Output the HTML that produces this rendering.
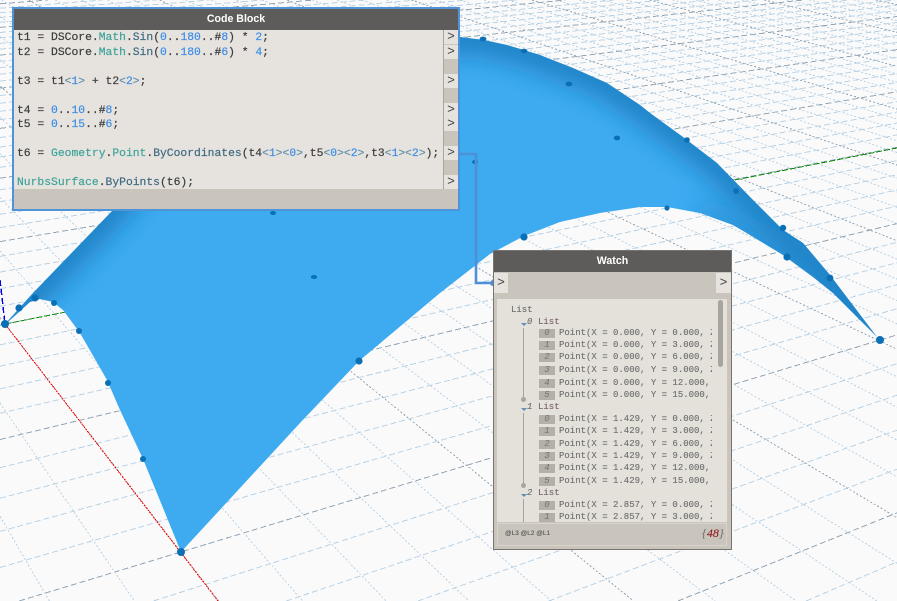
<!DOCTYPE html>
<html><head><meta charset="utf-8">
<style>
html,body{margin:0;padding:0;background:#fafafa;width:897px;height:601px;overflow:hidden}
#page{position:relative;width:897px;height:601px;overflow:hidden;background:#fafafa;font-family:"Liberation Sans",sans-serif}
svg.bg{position:absolute;left:0;top:0;display:block}
.box{position:absolute;box-sizing:border-box}
.title{position:absolute;background:#5e5c5a;color:#fff;font-weight:bold;font-size:10.6px;text-align:center}
.code{position:absolute;left:3px;font:11.35px/14px "Liberation Mono",monospace;color:#3c3c3c;white-space:pre;-webkit-text-stroke:0.2px}
.c{color:#3fa398}.n{color:#3c8ce6}.m{color:#3f6a80}.a{color:#5f8fa8}
.port{position:absolute;background:#e6e3df;font:13px/14px "Liberation Mono",monospace;color:#444;text-align:center}
.row{position:absolute;font:9px/11px "Liberation Mono",monospace;color:#6e6e6e;white-space:pre;overflow:hidden;-webkit-text-stroke:0.12px}
.idx{position:absolute;left:539px;width:16px;height:9px;background:#b4b0a8;font:italic 9px/9px "Liberation Mono",monospace;color:#77736c;text-align:center}
.tri{position:absolute;width:0;height:0;border-left:3px solid transparent;border-right:3px solid transparent;border-top:3px solid #5f8fb8}
.vl{position:absolute;width:1px;left:523px;background:#a8a59e}
.dot{position:absolute;left:521px;width:5px;height:5px;border-radius:50%;background:#a8a59e}
</style></head>
<body><div id="page">
<svg class="bg" width="897" height="601" viewBox="0 0 897 601" xmlns="http://www.w3.org/2000/svg">
<defs>
<clipPath id="s"><path d="M5,324L33,293L113,210L200,100L460,37L484,40L507,45L540,55L573,68L607,83L640,105L650,113L683,137L717,163L753,200L783,230L803,243L830,275L877,337L880,340L857,317L833,293L813,277L783,255L750,235L733,225L700,213L667,207L640,207L600,213L560,222L524,236L490,254L440,293L359,361L300,423L181,552L143,459L120,410L107,380L80,333L63,310L53,302L40,299L30,302L8,322Z"/></clipPath>
<filter id="b" x="-20%" y="-20%" width="140%" height="140%"><feGaussianBlur stdDeviation="14"/></filter>
</defs>
<g id="grid" shape-rendering="crispEdges" fill="none"></g>
<g shape-rendering="crispEdges" fill="none">
<path d="M5,324L218,601" stroke="#f00" stroke-width="1" stroke-dasharray="2 1"/>
<path d="M5,324L897,148" stroke="#0a8a0a" stroke-width="1" stroke-dasharray="6 2"/>
<path d="M0,280L5,324" stroke="#0000e0" stroke-width="1.4" stroke-dasharray="6 3"/>
</g>
<path d="M5,324L33,293L113,210L200,100L460,37L484,40L507,45L540,55L573,68L607,83L640,105L650,113L683,137L717,163L753,200L783,230L803,243L830,275L877,337L880,340L857,317L833,293L813,277L783,255L750,235L733,225L700,213L667,207L640,207L600,213L560,222L524,236L490,254L440,293L359,361L300,423L181,552L143,459L120,410L107,380L80,333L63,310L53,302L40,299L30,302L8,322Z" fill="#3eabf1"/>
<g clip-path="url(#s)">
<path d="M5,324L33,293L113,210L200,100L460,37L484,40L507,45L540,55L573,68L607,83L640,105L683,137L717,163L750,198L783,230L830,278L880,340" fill="none" stroke="#1272b5" stroke-width="24" filter="url(#b)"/>
<path d="M700,213L783,253L880,340" fill="none" stroke="#1a80c4" stroke-width="14" filter="url(#b)"/>
</g>
<g fill="#0a6fb4">
<circle cx="5" cy="324" r="4"/><circle cx="19" cy="308" r="3.6"/><circle cx="35" cy="298" r="3.5"/><circle cx="54" cy="303" r="3"/><circle cx="79" cy="331" r="3"/><circle cx="108" cy="383" r="3"/><circle cx="143" cy="459" r="3"/><circle cx="181" cy="552" r="4"/>
<circle cx="359" cy="361" r="3.6"/><circle cx="524" cy="237" r="3.6"/><circle cx="667" cy="208" r="2.6"/><circle cx="787" cy="257" r="3.6"/><circle cx="830" cy="278" r="3.4"/><circle cx="783" cy="228" r="3.2"/><circle cx="880" cy="340" r="4"/><circle cx="736" cy="191" r="2.8"/><circle cx="687" cy="140" r="2.8"/>
<ellipse cx="483" cy="39" rx="3.4" ry="2.4"/><ellipse cx="524" cy="51" rx="3.4" ry="2.2"/><ellipse cx="569" cy="84" rx="3.4" ry="2.4"/><ellipse cx="617" cy="138" rx="3.2" ry="2.4"/><ellipse cx="475" cy="162" rx="3" ry="2"/><ellipse cx="314" cy="277" rx="3.2" ry="2"/><ellipse cx="273" cy="213" rx="3" ry="2"/>
</g>
<path d="M458,154H476V283H494" fill="none" stroke="#4d90d8" stroke-width="2.6"/>
<circle cx="493" cy="283" r="3" fill="#4d90d8"/>
</svg>

<!-- Code Block -->
<div class="box" style="left:12px;top:7px;width:448px;height:204px;background:#c9c4bc;border:2px solid #4f94d8">
  <div class="title" style="left:0;top:0;width:444px;height:21px;line-height:21px">Code Block</div>
  <div style="position:absolute;left:0;top:21px;width:429px;height:159px;background:#e6e3df;border-right:1px solid #a9a59e"></div>
  <div class="port" style="left:430px;top:21px;width:14px;height:14px">&gt;</div>
  <div class="port" style="left:430px;top:36px;width:14px;height:14px">&gt;</div>
  <div class="port" style="left:430px;top:65px;width:14px;height:14px">&gt;</div>
  <div class="port" style="left:430px;top:94px;width:14px;height:14px">&gt;</div>
  <div class="port" style="left:430px;top:108px;width:14px;height:14px">&gt;</div>
  <div class="port" style="left:430px;top:137px;width:14px;height:14px">&gt;</div>
  <div class="port" style="left:430px;top:166px;width:14px;height:14px">&gt;</div>
  <div class="code" style="top:22px">t1 = DSCore.<span class="c">Math</span>.<span class="m">Sin</span>(<span class="n">0</span>..<span class="n">180</span>..#<span class="n">8</span>) * <span class="n">2</span>;</div>
  <div class="code" style="top:37px">t2 = DSCore.<span class="c">Math</span>.<span class="m">Sin</span>(<span class="n">0</span>..<span class="n">180</span>..#<span class="n">6</span>) * <span class="n">4</span>;</div>
  <div class="code" style="top:66px">t3 = t1<span class="a">&lt;</span><span class="n">1</span><span class="a">&gt;</span> + t2<span class="a">&lt;</span><span class="n">2</span><span class="a">&gt;</span>;</div>
  <div class="code" style="top:95px">t4 = <span class="n">0</span>..<span class="n">10</span>..#<span class="n">8</span>;</div>
  <div class="code" style="top:109px">t5 = <span class="n">0</span>..<span class="n">15</span>..#<span class="n">6</span>;</div>
  <div class="code" style="top:138px">t6 = <span class="c">Geometry</span>.<span class="c">Point</span>.<span class="m">ByCoordinates</span>(t4<span class="a">&lt;</span><span class="n">1</span><span class="a">&gt;&lt;</span><span class="n">0</span><span class="a">&gt;</span>,t5<span class="a">&lt;</span><span class="n">0</span><span class="a">&gt;&lt;</span><span class="n">2</span><span class="a">&gt;</span>,t3<span class="a">&lt;</span><span class="n">1</span><span class="a">&gt;&lt;</span><span class="n">2</span><span class="a">&gt;</span>);</div>
  <div class="code" style="top:167px"><span class="c">NurbsSurface</span>.<span class="m">ByPoints</span>(t6);</div>
</div>

<!-- Watch -->
<div class="box" style="left:493px;top:250px;width:239px;height:300px;background:#c9c4bc;border:1px solid #77746f"></div>
<div class="title" style="left:494px;top:251px;width:237px;height:21px;line-height:21px">Watch</div>
<div class="port" style="left:494px;top:273px;width:14px;height:20px;line-height:20px">&gt;</div>
<div class="port" style="left:716px;top:273px;width:15px;height:20px;line-height:20px">&gt;</div>
<div class="box" style="left:497px;top:299px;width:230px;height:223px;background:#e4e1db"></div>
<div class="box" style="left:718px;top:300px;width:5px;height:67px;background:#a8a59e;border-radius:3px"></div>
<div class="row" style="left:511px;top:305px">List</div>

<div class="tri" style="left:521px;top:323px"></div>
<div class="row" style="left:527px;top:317px;font-style:italic">0</div>
<div class="row" style="left:538px;top:317px;color:#7a6468">List</div>
<div class="vl" style="top:328px;height:70px"></div><div class="dot" style="top:397px"></div>
<div class="idx" style="top:329px">0</div><div class="row" style="left:559px;top:328px;width:153px">Point(X = 0.000, Y = 0.000, Z</div>
<div class="idx" style="top:341px">1</div><div class="row" style="left:559px;top:340px;width:153px">Point(X = 0.000, Y = 3.000, Z</div>
<div class="idx" style="top:353px">2</div><div class="row" style="left:559px;top:352px;width:153px">Point(X = 0.000, Y = 6.000, Z</div>
<div class="idx" style="top:366px">3</div><div class="row" style="left:559px;top:365px;width:153px">Point(X = 0.000, Y = 9.000, Z</div>
<div class="idx" style="top:379px">4</div><div class="row" style="left:559px;top:378px;width:153px">Point(X = 0.000, Y = 12.000, Z</div>
<div class="idx" style="top:391px">5</div><div class="row" style="left:559px;top:390px;width:153px">Point(X = 0.000, Y = 15.000, Z</div>

<div class="tri" style="left:521px;top:408px"></div>
<div class="row" style="left:527px;top:402px;font-style:italic">1</div>
<div class="row" style="left:538px;top:402px;color:#7a6468">List</div>
<div class="vl" style="top:413px;height:71px"></div><div class="dot" style="top:483px"></div>
<div class="idx" style="top:415px">0</div><div class="row" style="left:559px;top:414px;width:153px">Point(X = 1.429, Y = 0.000, Z</div>
<div class="idx" style="top:427px">1</div><div class="row" style="left:559px;top:426px;width:153px">Point(X = 1.429, Y = 3.000, Z</div>
<div class="idx" style="top:440px">2</div><div class="row" style="left:559px;top:439px;width:153px">Point(X = 1.429, Y = 6.000, Z</div>
<div class="idx" style="top:452px">3</div><div class="row" style="left:559px;top:451px;width:153px">Point(X = 1.429, Y = 9.000, Z</div>
<div class="idx" style="top:464px">4</div><div class="row" style="left:559px;top:463px;width:153px">Point(X = 1.429, Y = 12.000, Z</div>
<div class="idx" style="top:477px">5</div><div class="row" style="left:559px;top:476px;width:153px">Point(X = 1.429, Y = 15.000, Z</div>

<div class="tri" style="left:521px;top:494px"></div>
<div class="row" style="left:527px;top:488px;font-style:italic">2</div>
<div class="row" style="left:538px;top:488px;color:#7a6468">List</div>
<div class="vl" style="top:499px;height:23px"></div>
<div class="idx" style="top:501px">0</div><div class="row" style="left:559px;top:500px;width:153px">Point(X = 2.857, Y = 0.000, Z</div>
<div class="idx" style="top:513px">1</div><div class="row" style="left:559px;top:512px;width:153px;height:10px">Point(X = 2.857, Y = 3.000, Z</div>

<div class="box" style="left:497px;top:523px;width:230px;height:23px;border:1px solid #d8d4cd"></div>
<div class="row" style="left:505px;top:529px;font:6.5px/9px 'Liberation Sans',sans-serif;color:#555">@L3 @L2 @L1</div>
<div class="row" style="left:702px;top:526px;font:italic 12px/14px 'Liberation Serif',serif;color:#777">{<span style="color:#8b1a1a">48</span>}</div>

<script>
(function(){
var c=-0.0267,e=0.0189,Px=12.76,Py=8.06,Qx=50.7,Qy=-3.9;
function H(x,y){var w=1+c*x+e*y;return [(5+Px*x+Qx*y)/w,(324+Py*x+Qy*y)/w];}
var g=document.getElementById('grid'),s='',minW=0.06,L=50,W=897,HH=601;
function clip(a,b){
 var t0=0,t1=1,dx=b[0]-a[0],dy=b[1]-a[1];
 var p=[-dx,dx,-dy,dy],q=[a[0],W-a[0],a[1],HH-a[1]];
 for(var i=0;i<4;i++){
  if(p[i]==0){if(q[i]<0)return null;continue;}
  var r=q[i]/p[i];
  if(p[i]<0){if(r>t1)return null;if(r>t0)t0=r;}
  else{if(r<t0)return null;if(r<t1)t1=r;}
 }
 return [[a[0]+t0*dx,a[1]+t0*dy],[a[0]+t1*dx,a[1]+t1*dy]];
}
function ln(a,b,maj,dash){
 var k=clip(a,b);if(!k)return;a=k[0];b=k[1];
 s+='<line x1="'+a[0].toFixed(1)+'" y1="'+a[1].toFixed(1)+'" x2="'+b[0].toFixed(1)+'" y2="'+b[1].toFixed(1)+'" stroke="'+(maj?'#93a5b5':'#b9d3e5')+'" stroke-dasharray="'+dash+'"/>';
}
var i,lo,hi;
for(i=-L;i<=36;i++){
 lo=Math.max(-L,(minW-1-c*i)/e);hi=L;
 if(lo>=hi)continue;
 ln(H(i,lo),H(i,hi),i%5==0,'6 3');
}
for(i=-L;i<=L;i++){
 lo=-L;hi=Math.min(L,(minW-1-e*i)/c);
 if(lo>=hi)continue;
 ln(H(lo,i),H(hi,i),i%5==0,'2 2');
}
g.innerHTML=s;
})();
</script>
</div></body></html>
